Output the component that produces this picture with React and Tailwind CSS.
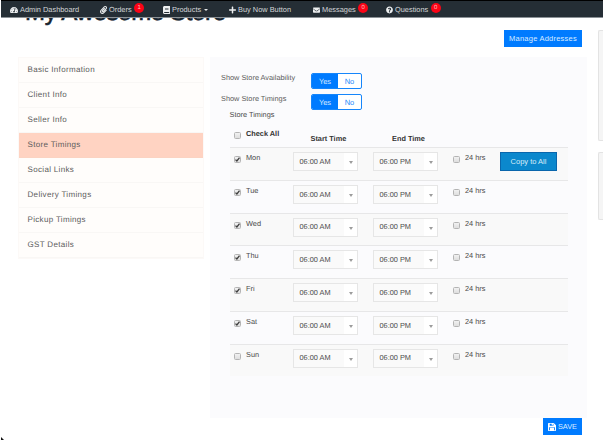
import React from "react";
import {
  FaTachometerAlt,
  FaPaperclip,
  FaBook,
  FaPlus,
  FaEnvelope,
  FaQuestionCircle,
} from "react-icons/fa";

const NAV = [
  { label: "Admin Dashboard", Icon: FaTachometerAlt, width: "w-[90px]", icon: "w-[8px]" },
  { label: "Orders", Icon: FaPaperclip, width: "w-[63px]", badge: "1", icon: "w-[7px]" },
  { label: "Products", Icon: FaBook, width: "w-[66px]", caret: true, icon: "w-[7px]" },
  { label: "Buy Now Button", Icon: FaPlus, width: "w-[84px]", icon: "w-[7px]" },
  { label: "Messages", Icon: FaEnvelope, width: "w-[73px]", badge: "0", icon: "w-[7px]" },
  { label: "Questions", Icon: FaQuestionCircle, width: "w-[70px]", badge: "0", icon: "w-[7px]" },
];

const MENU = [
  "Basic Information",
  "Client Info",
  "Seller Info",
  "Store Timings",
  "Social Links",
  "Delivery Timings",
  "Pickup Timings",
  "GST Details",
];

const DAYS = ["Mon", "Tue", "Wed", "Thu", "Fri", "Sat", "Sun"];

function NavBar() {
  return (
    <nav className="flex h-[18px] shrink-0 border-t border-b border-t-black border-b-[#8b9196] bg-[#252e35] pl-[9px] text-[7.4px] text-[#d3d6d8]">
      {NAV.map(({ label, Icon, width, badge, caret, icon }) => (
        <a key={label} className={`flex h-[18px] shrink-0 items-center whitespace-nowrap ${width}`}>
          <Icon className={`mr-[2px] h-[8px] text-[#eef0f1] ${icon}`} />
          <span className="leading-none">{label}</span>
          {badge && (
            <span className="mb-[4px] ml-[2.5px] flex size-[10px] items-center justify-center rounded-full bg-[#fb0416] text-[6px] leading-none text-[#ffb9bd]">
              {badge}
            </span>
          )}
          {caret && (
            <span className="ml-[2.5px] border-x-2 border-t-2 border-x-transparent border-t-[#e5e7e8]" />
          )}
        </a>
      ))}
    </nav>
  );
}

function Sidebar() {
  return (
    <ul className="mt-[27px] h-[202px] w-[186px] shrink-0 border border-[#fcf9f7] text-[8px] tracking-[0.33px] text-[#5c5c5c]">
      {MENU.map((item) => (
        <li
          key={item}
          className={`flex h-[25px] items-center border-b pl-[8.5px] leading-none ${
            item === "Store Timings"
              ? "border-[#fbd3c2] bg-[#ffd3c2]"
              : "border-[#f9f7f5] bg-[#fffdfb]"
          }`}
        >
          {item}
        </li>
      ))}
    </ul>
  );
}

function Toggle() {
  return (
    <div className="flex h-[16px] w-[51px] overflow-hidden rounded-[2px] border border-[#1686fb] bg-white text-center text-[7.5px] leading-[15px]">
      <span className="w-[26px] bg-[#007bff] text-[#d9ebff]">Yes</span>
      <span className="flex-1 text-[#1d88fb]">No</span>
    </div>
  );
}

function Check({ on }) {
  return (
    <span className="flex size-[7px] items-center justify-center rounded-[1.5px] border border-[#b4b4b4] bg-gradient-to-b from-[#f1f1f1] to-[#dedede]">
      {on && (
        <svg viewBox="0 0 7 7" className="size-[7px] shrink-0 overflow-visible">
          <path d="M1.5 3.6 L2.9 5 L5.5 1.7" fill="none" stroke="#3d3d3d" strokeWidth="1.3" />
        </svg>
      )}
    </span>
  );
}

function TimeSelect({ value }) {
  return (
    <div className="flex h-[19px] w-[65px] items-center border border-[#e6e6e6] bg-[#fafafa]">
      <span className="flex-1 pl-[5.5px] leading-none text-[#4a4a4a]">{value}</span>
      <span className="flex h-full w-[13px] items-center justify-center bg-white pt-[2px]">
        <span className="border-x-[2px] border-t-[3px] border-x-transparent border-t-[#9c9c9c]" />
      </span>
    </div>
  );
}

function SaveIcon() {
  return (
    <svg viewBox="0 0 14 14" className="size-[8px]">
      <path
        fill="#fff"
        fillRule="evenodd"
        d="M1 0H10L14 4V13L13 14H1L0 13V1ZM3 1.5V5H9.5V1.5H8.5V4H6.5V1.5ZM2 7.5V12.5H3.5V8.5H10.5V12.5H12V7.5Z"
      />
    </svg>
  );
}

function TimingsTable() {
  return (
    <div className="ml-[20px] w-[338px]">
      <div className="grid h-[26px] grid-cols-[12px_64.5px_81.5px_1fr] pl-[4px] leading-none font-bold whitespace-nowrap text-[#333]">
        <span className="pt-[11px]">
          <Check />
        </span>
        <span className="pt-[9px]">Check All</span>
        <span className="pt-[13.5px]">Start Time</span>
        <span className="pt-[13.5px]">End Time</span>
      </div>
      {DAYS.map((day, i) => (
        <div
          key={day}
          className={`grid h-[32.75px] grid-cols-[12px_47px_80px_80px_12px_35px_1fr] border-t border-[#e7e7e8] pl-[4px] leading-none text-[#4a4a4a] ${
            i % 2 === 0 ? "bg-[#f9f9f9]" : "bg-[#fbfbfd]"
          }`}
        >
          <span className="pt-[8px]">
            <Check on={day !== "Sun"} />
          </span>
          <span className="pt-[6px]">{day}</span>
          <span className="pt-[4px]">
            <TimeSelect value="06:00 AM" />
          </span>
          <span className="pt-[4px]">
            <TimeSelect value="06:00 PM" />
          </span>
          <span className="pt-[8px]">
            <Check />
          </span>
          <span className="pt-[6px]">24 hrs</span>
          {i === 0 && (
            <span className="pt-[4px]">
              <button className="block h-[19px] w-[57px] border border-[#0a66ac] bg-[#0b88cd] text-[7.5px] leading-none whitespace-nowrap text-[#d8edf8]">
                Copy to All
              </button>
            </span>
          )}
        </div>
      ))}
    </div>
  );
}

export default function App() {
  return (
    <div className="h-[445px] w-[607px] overflow-hidden bg-white pl-px font-['Liberation_Sans',Arial,sans-serif] text-[7.35px] [text-rendering:geometricPrecision]">
      <div className="flex h-[440px] w-[602px] flex-col">
        <NavBar />
        <div className="flex min-h-0 flex-1">
          <div className="w-[586px] shrink-0">
            <div className="flex h-[12px] items-end overflow-hidden">
              <h1 className="mb-[5.5px] ml-[24px] text-[24px] leading-[24px] font-medium tracking-[-0.35px] whitespace-nowrap text-[#16232e] [-webkit-text-stroke:0.6px_#16232e]">
                My Awesome Store
              </h1>
            </div>
            <div className="flex h-[398px] pl-[17px]">
              <Sidebar />
              <section className="ml-[6px] flex w-[377px] flex-col">
                <div className="flex h-[27px] shrink-0 justify-end pr-[5px]">
                  <button className="h-[17px] w-[78px] bg-[#007bff] text-[7.5px] leading-none tracking-[0.23px] whitespace-nowrap text-[#d9ebff]">
                    Manage Addresses
                  </button>
                </div>
                <div className="h-[361px] shrink-0 bg-[#fbfbfd] pt-[16px] text-[#5c5c5c]">
                  <div className="flex h-[21px] pl-[11px]">
                    <span className="w-[90px] pt-px leading-none">Show Store Availability</span>
                    <Toggle />
                  </div>
                  <div className="flex h-[17px] pl-[11px]">
                    <span className="w-[90px] pt-px leading-none">Show Store Timings</span>
                    <Toggle />
                  </div>
                  <p className="h-[10px] pl-[19.5px] leading-none text-[#4a4a4a]">Store Timings</p>
                  <TimingsTable />
                </div>
                <div className="flex shrink-0 justify-end pr-[5px]">
                  <button className="flex h-[17px] w-[39px] items-center justify-center gap-[2px] bg-[#007bff] leading-none text-[#d9ebff]">
                    <SaveIcon />
                    SAVE
                  </button>
                </div>
              </section>
            </div>
          </div>
          <aside className="flex flex-1 flex-col gap-[11px] pt-[12px] pl-[11px]">
            <div className="h-[111px] rounded-l-[2px] border border-r-0 border-[#e3e3e3] bg-[#f5f5f5]" />
            <div className="h-[68px] rounded-l-[2px] border border-r-0 border-[#e3e3e3] bg-[#f5f5f5]" />
          </aside>
        </div>
        <div className="-mt-[3px] h-[3px] w-[3px]">
          <svg viewBox="0 0 3 3" className="size-[3px]">
            <path d="M0 0 L3 3 H0 Z" fill="#111" />
          </svg>
        </div>
      </div>
    </div>
  );
}
